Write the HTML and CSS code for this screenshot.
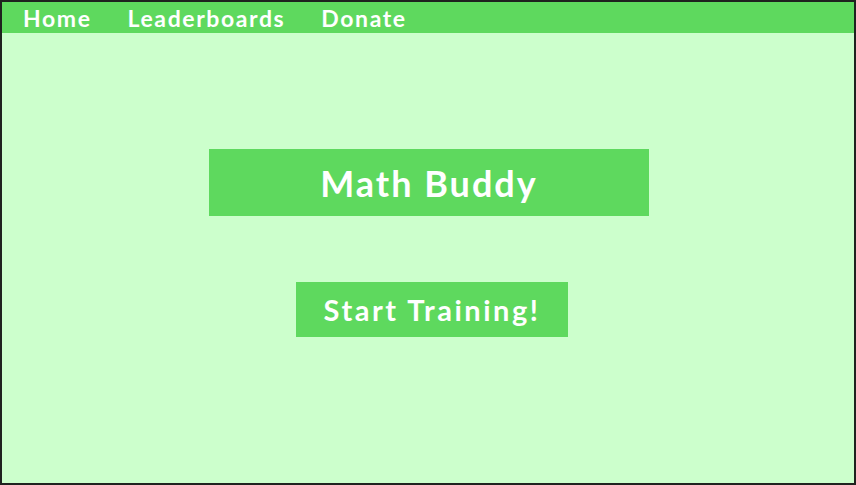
FILE: index.html
```html
<!DOCTYPE html>
<html>
<head>
<meta charset="utf-8">
<link rel="stylesheet" href="styles.css">
</head>
<body>
<div class="frame">
  <nav class="nav">
    <a class="nav-link" href="#">Home</a>
    <a class="nav-link" href="#">Leaderboards</a>
    <a class="nav-link" href="#">Donate</a>
  </nav>
  <main class="main">
    <h1 class="title">Math Buddy</h1>
    <button class="start">Start Training!</button>
  </main>
</div>
</body>
</html>
```
FILE: styles.css
```css
html, body {
  margin: 0;
  padding: 0;
  height: 100%;
}
.frame {
  box-sizing: border-box;
  height: 100vh;
  border: 2px solid #1f221f;
  background: #ccffcc;
  font-family: "Lato", "DejaVu Sans", sans-serif;
  font-weight: 700;
  color: #fff;
}
.nav {
  background: #5ed95e;
  height: 31px;
  display: flex;
  align-items: center;
  padding-left: 21px;
  padding-top: 1px;
  box-sizing: border-box;
  gap: 36px;
}
.nav-link {
  color: #fff;
  text-decoration: none;
  font-size: 23px;
  letter-spacing: 1.6px;
}
.main {
  display: flex;
  flex-direction: column;
  align-items: center;
  padding-top: 116px;
}
.title {
  margin: 0;
  box-sizing: border-box;
  width: 440px;
  height: 67px;
  background: #5ed95e;
  display: flex;
  align-items: center;
  justify-content: center;
  font-size: 36px;
  font-weight: 700;
  letter-spacing: 2px;
  margin-left: 2px;
}
.start {
  margin-top: 66px;
  width: 272px;
  height: 55px;
  border: none;
  background: #5ed95e;
  color: #fff;
  font-family: inherit;
  font-weight: 700;
  font-size: 29px;
  letter-spacing: 2.5px;
  padding: 0;
  margin-left: 8px;
}
```
